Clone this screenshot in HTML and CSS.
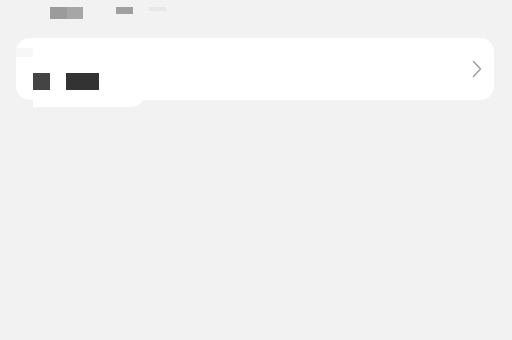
FILE: index.html
```html
<!DOCTYPE html>
<html lang="zh">
<head>
<meta charset="utf-8">
<link rel="stylesheet" href="styles.css">
</head>
<body>
<div class="top">
  <span class="blk blk-a"><span class="half d"></span><span class="half l"></span></span>
  <span class="blk blk-b"></span>
  <span class="blk blk-c"></span>
</div>
<div class="card">
  <div class="band"></div>
  <div class="patch"></div>
  <div class="row">
    <span class="dk dk-1"></span>
    <span class="dk dk-2"></span>
  </div>
  <svg class="chev" width="10" height="18" viewBox="0 0 10 18"><path d="M1.5 1.5 L8.5 9 L1.5 16.5" fill="none" stroke="#9a9a9a" stroke-width="1.4" stroke-linecap="round" stroke-linejoin="round"/></svg>
</div>
</body>
</html>
```
FILE: styles.css
```css
html, body { margin: 0; padding: 0; }
body {
  width: 512px; height: 340px; overflow: hidden;
  background: #f2f2f2;
  font-family: "Noto Sans", "Noto Sans CJK SC", sans-serif;
}
.top {
  display: flex; align-items: flex-start; gap: 33px;
  padding: 7px 0 0 50px; height: 12px;
}
.blk { display: block; }
.blk-a { display: flex; width: 33px; height: 12px; }
.half { flex: 1; }
.half.d { background: #9b9b9b; }
.half.l { background: #a6a6a6; }
.blk-b { width: 17px; height: 7px; background: #a0a0a0; }
.blk-c { width: 17px; height: 4px; background: #e7e7e7; margin-left: -17px; }
.card {
  position: relative;
  margin: 19px 18px 0 16px;
  height: 62px;
  background: #fff;
  border-radius: 14px;
  display: flex; align-items: center; justify-content: space-between;
  padding: 0 12px 0 17px;
}
.band {
  position: absolute; left: 0; top: 10px; width: 17px; height: 9px;
  background: #f7f7f7;
}
.patch {
  position: absolute; left: 17px; top: 50px; width: 112px; height: 19px;
  background: #fff; border-bottom-right-radius: 14px;
}
.row { display: flex; gap: 16px; margin-top: 25px; position: relative; }
.dk { display: block; height: 17px; }
.dk-1 { width: 17px; background: #444; }
.dk-2 { width: 33px; background: #333; }
.chev { margin-top: -1px; }
```
